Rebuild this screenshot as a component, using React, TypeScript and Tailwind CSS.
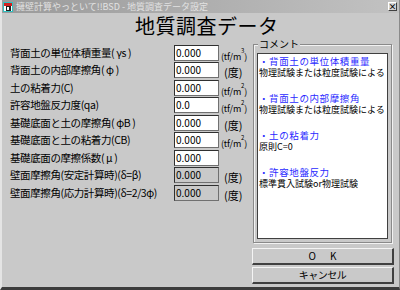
import type { ReactNode } from "react";

type Row = {
  label: ReactNode;
  key: string;
  value: string;
  unit: ReactNode;
  disabled?: boolean;
};

const TF = (
  <span className="text-[9px] tracking-[-0.2px]">
    (tf/m<sup className="text-[6px] align-super">2</sup>)
  </span>
);
const TF3 = (
  <span className="text-[9px] tracking-[-0.2px]">
    (tf/m<sup className="text-[6px] align-super">3</sup>)
  </span>
);
const DEG = <span className="pl-[3px] text-[11px]">(度)</span>;

// greek letters sit wider in the original font
const G = ({ children }: { children: ReactNode }) => <span className="px-[2px]">{children}</span>;

const ROWS: Row[] = [
  { key: "r1", label: <>背面土の単位体積重量(<G>γs</G>)</>, value: "0.000", unit: TF3 },
  { key: "r2", label: <>背面土の内部摩擦角(<G>φ</G>)</>, value: "0.000", unit: DEG },
  { key: "r3", label: "土の粘着力(C)", value: "0.000", unit: TF },
  { key: "r4", label: "許容地盤反力度(qa)", value: "0.0", unit: TF },
  { key: "r5", label: <>基礎底面と土の摩擦角(<G>φB</G>)</>, value: "0.000", unit: DEG },
  { key: "r6", label: "基礎底面と土の粘着力(CB)", value: "0.000", unit: TF },
  { key: "r7", label: <>基礎底面の摩擦係数(<G>μ</G>)</>, value: "0.000", unit: null },
  { key: "r8", label: "壁面摩擦角(安定計算時)(δ=β)", value: "0.000", unit: DEG, disabled: true },
  { key: "r9", label: "壁面摩擦角(応力計算時)(δ=2/3φ)", value: "0.000", unit: DEG, disabled: true },
];

const COMMENTS = [
  { title: "・背面土の単位体積重量", body: "物理試験または粒度試験による" },
  { title: "・背面土の内部摩擦角", body: "物理試験または粒度試験による" },
  { title: "・土の粘着力", body: "原則C=0" },
  { title: "・許容地盤反力", body: "標準貫入試験or物理試験" },
];

const AppIcon = () => (
  <svg width="10" height="10" viewBox="0 0 10 10">
    <rect x="0" y="0" width="10" height="10" fill="#30c0c0" />
    <rect x="1" y="1" width="8" height="8" fill="#ffffff" />
    <rect x="1" y="1" width="8" height="3" fill="#d02020" />
    <rect x="3" y="4" width="5" height="5" fill="#202020" />
    <rect x="4" y="5" width="2" height="3" fill="#ffffff" />
  </svg>
);

export default function App() {
  return (
    <div className="w-[400px] h-[290px] bg-[#c9c9c9] flex flex-col border-l-[2px] border-l-[#e4e4e4] border-b-[3px] border-b-[#3c3c3c] border-r border-r-[#8a8a8a] font-['Noto_Sans_CJK_JP',sans-serif] text-black overflow-hidden">
      {/* title bar */}
      <div className="h-[13px] flex items-center bg-gradient-to-r from-[#9a9a9a] to-[#c2c2c2] pl-[1px] pr-[2px]">
        <AppIcon />
        <span className="ml-[3px] text-[9px] leading-none text-[#e2e2e2] whitespace-nowrap">
          擁壁計算やっといて!!BSD - 地質調査データ設定
        </span>
        <div className="ml-auto w-[9px] h-[9px] bg-[#d4d4d4] border border-t-white border-l-white border-r-[#404040] border-b-[#404040] flex items-center justify-center text-[8px] leading-none font-bold">
          ×
        </div>
      </div>

      {/* heading */}
      <div className="h-[26px] flex items-center pl-[133px] text-[20px] leading-none tracking-[0.5px]">
        地質調査データ
      </div>

      <div className="flex">
        {/* parameter rows */}
        <div className="w-[250px] pl-[8px] pt-[5px]">
          {ROWS.map((row) => (
            <div key={row.key} className="h-[17.5px] flex items-center">
              <div className="w-[164px] text-[10.5px] leading-none whitespace-nowrap tracking-[-0.4px]">
                {row.label}
              </div>
              <div
                className={`w-[45px] h-[16px] border border-t-[#303030] border-l-[#303030] border-r-[#707070] border-b-[#707070] text-[10px] leading-[14px] pl-[1px] ${
                  row.disabled ? "bg-[#c9c9c9]" : "bg-white"
                }`}
              >
                {row.value}
              </div>
              <div className="ml-[2px] leading-none whitespace-nowrap">{row.unit}</div>
            </div>
          ))}
        </div>

        {/* comments + buttons */}
        <div className="w-[142px] pt-[5px]">
          <div className="relative ml-[1px] w-[139px] h-[199px] border border-[#8a8a8a] shadow-[inset_1px_1px_0_#f2f2f2,1px_1px_0_#f2f2f2] px-[3px] pt-[8px] pb-[3px]">
            <span className="absolute -top-[7px] left-[4px] px-[1px] bg-[#c9c9c9] text-[10px] leading-[12px]">
              コメント
            </span>
            <div className="h-full bg-white border border-[#404040] pt-[1px] pl-[1px]">
              {COMMENTS.map((c) => (
                <div key={c.title} className="mb-[12.3px]">
                  <div className="h-[12.3px] text-[9.5px] leading-[12.3px] text-[#2a2aff] tracking-[0.6px] whitespace-nowrap">
                    {c.title}
                  </div>
                  <div className="h-[12.3px] text-[9px] leading-[12.3px] whitespace-nowrap">{c.body}</div>
                </div>
              ))}
            </div>
          </div>

          <button className="mt-[5px] w-[142px] h-[17px] bg-[#c9c9c9] border border-t-[#f4f4f4] border-l-[#f4f4f4] border-r-[2px] border-b-[2px] border-r-[#404040] border-b-[#404040] flex items-center justify-center gap-[14px] text-[10px] leading-none">
            <span>O</span>
            <span>K</span>
          </button>
          <button className="mt-[2px] w-[142px] h-[17px] bg-[#c9c9c9] border border-t-[#f4f4f4] border-l-[#f4f4f4] border-r-[2px] border-b-[2px] border-r-[#404040] border-b-[#404040] flex items-center justify-center text-[10px] leading-none tracking-[-0.5px]">
            キャンセル
          </button>
        </div>
      </div>
    </div>
  );
}
